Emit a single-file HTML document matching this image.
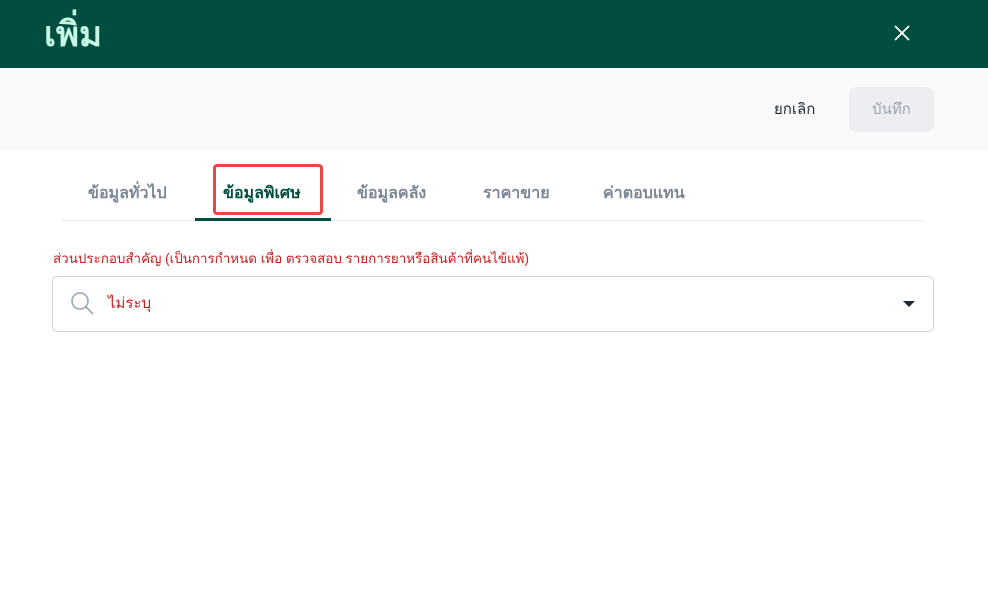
<!DOCTYPE html>
<html><head><meta charset="utf-8"><style>
*{margin:0;padding:0;box-sizing:border-box}
body{width:988px;height:592px;background:#fff;font-family:"Liberation Sans","DejaVu Sans",sans-serif;position:relative;overflow:hidden}
.hdr{position:absolute;left:0;top:0;width:988px;height:68px;background:#014d40}
.title{position:absolute;left:44px;top:15px;font-size:35px;font-weight:bold;color:#c6f7e2;line-height:40px}
.bar{position:absolute;left:0;top:68px;width:988px;height:82px;background:#f8f9fb}
.cancel{position:absolute;left:774px;top:100px;font-size:15px;color:#1f2933;line-height:20px}
.save{position:absolute;left:849px;top:87px;width:85px;height:45px;background:#eceef1;border-radius:8px;color:#9aa5b1;font-size:15px;text-align:center;line-height:45px}
.tab{position:absolute;top:183px;font-size:16px;font-weight:bold;color:#7b8794;line-height:22px}
.line{position:absolute;left:61px;top:220px;width:863px;height:1px;background:#e4e7eb}
.act{position:absolute;left:195px;top:218px;width:136px;height:3px;background:#014d40}
.box{position:absolute;left:213px;top:164px;width:110px;height:51px;border:3px solid #ef4444;border-radius:4px}
.lbl{position:absolute;left:53px;top:250px;font-size:13.4px;color:#c81e1e;line-height:18px}
.sel{position:absolute;left:52px;top:276px;width:882px;height:56px;border:1px solid #cbd2d9;border-radius:5px}
.val{position:absolute;left:108px;top:294px;font-size:15px;color:#c81e1e;line-height:20px}
</style></head><body>
<div class="hdr"></div>
<div class="title">เพิ่ม</div>
<svg style="position:absolute;left:893px;top:24px" width="18" height="18" viewBox="0 0 18 18"><path d="M2 2L16 16M16 2L2 16" stroke="#fff" stroke-width="1.8"/></svg>
<div class="bar"></div>
<div class="cancel">ยกเลิก</div>
<div class="save">บันทึก</div>
<div class="tab" style="left:88px">ข้อมูลทั่วไป</div>
<div class="tab" style="left:223px;color:#014d40">ข้อมูลพิเศษ</div>
<div class="tab" style="left:357px">ข้อมูลคลัง</div>
<div class="tab" style="left:483px">ราคาขาย</div>
<div class="tab" style="left:603px">ค่าตอบแทน</div>
<div class="line"></div>
<div class="act"></div>
<div class="box"></div>
<div class="lbl">ส่วนประกอบสำคัญ (เป็นการกำหนด เพื่อ ตรวจสอบ รายการยาหรือสินค้าที่คนไข้แพ้)</div>
<div class="sel"></div>
<svg style="position:absolute;left:70px;top:291px" width="26" height="26" viewBox="0 0 26 26"><circle cx="10" cy="10" r="8" fill="none" stroke="#9aa5b1" stroke-width="1.6"/><path d="M16 16L23 23" stroke="#9aa5b1" stroke-width="1.6"/></svg>
<div class="val">ไม่ระบุ</div>
<svg style="position:absolute;left:903px;top:300px" width="12" height="8" viewBox="0 0 12 8"><path d="M0 1H12L6 7Z" fill="#1f2933"/></svg>
</body></html>
